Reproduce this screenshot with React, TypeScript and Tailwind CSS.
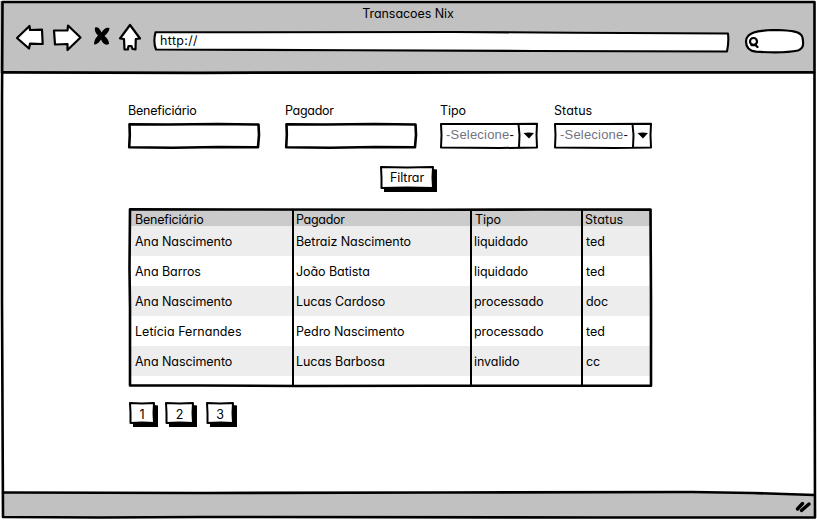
import type { ReactNode } from "react";

const overlay = "pointer-events-none absolute inset-0 h-full w-full overflow-visible";

function Ink({ d, width = 3, fill = "none" }: { d: string; width?: number; fill?: string }) {
  return <path d={d} fill={fill} stroke="#000" strokeWidth={width} strokeLinejoin="round" strokeLinecap="round" />;
}

function Field({ label, children, className }: { label: string; children: ReactNode; className: string }) {
  return (
    <div className={className}>
      <div className="h-[21px] whitespace-nowrap pt-px leading-4">{label}</div>
      {children}
    </div>
  );
}

function TextInput() {
  return (
    <div className="relative h-[26px] w-[132px] bg-white">
      <svg className={overlay}>
        <Ink width={2.6} d="M1.5 1.2 L40 1.5 L90 1 L130.500 1.500 L131 12 L130 24.200 L90 24 L45 24.800 L1.200 24.200 L1.800 12 Z" />
      </svg>
    </div>
  );
}

function Select() {
  return (
    <div className="relative flex h-[26px] w-[98px] items-center bg-white pl-[6px] font-['Liberation_Sans',Arial,sans-serif] text-[13px] tracking-[0.2px] text-[#73737f]">
      <span className="-mt-[2px]">
        -Selecione<span className="text-black">-</span>
      </span>
      <svg className={overlay}>
        <Ink width={2} d="M1 1 L50 1 L97 .8 L96.5 12 L97 24.5 L60 25 L1 24.5 L1.5 12 Z M78.5 1.2 L79.5 12 L79 24.5" />
        <path d="M83.500 10 Q88.500 9 94 10 L89 15.500 Z" />
      </svg>
    </div>
  );
}

function Button({ children, className, w, h }: { children: ReactNode; className: string; w: number; h: number }) {
  return (
    <button className={`relative flex items-center justify-center bg-white ${className}`}>
      <svg className={overlay}>
        <path d={`M4 ${h - 1} H${w - 1} V3 L${w + 3} 3.500 V${h + 3} H4 Z`} />
        <Ink width={2} d={`M1 1 L${w / 2} 1.500 L${w - 1} 1 L${w - 1.5} ${h / 2} L${w - 1} ${h - 1} L${w / 2} ${h - 1.5} L1.500 ${h - 1} L1.500 ${h / 2} Z`} />
      </svg>
      <span className="relative">{children}</span>
    </button>
  );
}

const rows = [
  ["Ana Nascimento", "Betraiz Nascimento", "liquidado", "ted"],
  ["Ana Barros", "João Batista", "liquidado", "ted"],
  ["Ana Nascimento", "Lucas Cardoso", "processado", "doc"],
  ["Letícia Fernandes", "Pedro Nascimento", "processado", "ted"],
  ["Ana Nascimento", "Lucas Barbosa", "invalido", "cc"],
];

function Table() {
  const grid = "grid grid-cols-[164px_178px_111px_1fr] items-center whitespace-nowrap";
  return (
    <div className="relative ml-px mt-[19px] h-[179px] w-[523px] bg-white pt-[2px]">
      <div className={`${grid} h-4 bg-[#cbcbcb] pt-[2px]`}>
        <span className="pl-[6px] tracking-[-0.2px]">Beneficiário</span>
        <span className="pl-[3px] tracking-[-0.3px]">Pagador</span>
        <span className="pl-1">Tipo</span>
        <span className="pl-[3px] tracking-[0.1px]">Status</span>
      </div>
      {rows.map((row, i) => (
        <div key={i} className={`${grid} h-[30px] pt-[2px] odd:bg-white even:bg-[#ededed]`}>
          <span className={i === 3 ? "pl-[6px] tracking-[0.04px]" : "pl-[6px]"}>{row[0]}</span>
          <span className="pl-[3px]">{row[1]}</span>
          <span className="pl-[3px]">{row[2]}</span>
          <span className="pl-[4px]">{row[3]}</span>
        </div>
      ))}
      <svg className={overlay}>
        <Ink width={2.6} d="M1 1.3 L110 1.500 L300 1.800 L410 1.500 L521.500 1.600 L522 90 L522 177.700 L300 177.700 L170 178 L70 177.500 L1 177.500 L1 100 L.5 60 Z" />
        <Ink width={2} d="M164 2 V177 M342 2 V177 M453 2 V177" />
      </svg>
    </div>
  );
}

function Header() {
  return (
    <header className="-ml-[2px] h-[72px] bg-[#c1c1c1] pl-[2px]">
      <div className="flex h-[21px] justify-center pt-[5px] leading-4">
        <span className="-ml-px">Transacoes Nix</span>
      </div>
      <div className="-ml-[2px] flex h-[40px] items-center">
        <svg className="h-[40px] w-[154px] shrink-0" viewBox="0 21.500 154 40">
          <Ink fill="#fff" width={2.2} d="M17 37.500 L29.500 25.500 L30 29.500 L42 29.200 L42.700 43.500 L30 43.200 L29 48 Z" />
          <Ink fill="#fff" width={2.2} d="M54 30 L67.500 30 L68 25 L80.500 37 L67.500 49.500 L67.500 43.500 L55 44 Z" />
          <path d="M95 27 Q99 26 101.500 32 Q105 26 109.500 27.500 Q109.500 31 104.500 35.500 Q109 39 109 43.500 Q104 46 101 39 Q98 44 94 44 Q94 39 98 35 Q94 31 95 27Z" />
          <Ink fill="#fff" width={2.2} d="M130 24.500 L140 38 L135.800 38.500 L135.500 49 L132.500 48.500 L131.500 45.500 L128.500 45.500 L127.800 49 L124.500 49 L124 38.500 L120 38 Z" />
        </svg>
        <div className="relative flex h-[20px] w-[575px] items-center pl-[6px]">
          <svg className={overlay}>
            <Ink fill="#fff" width={2.1} d="M1.5 .3 L300 0 L420 .7 L574 1.500 Q575 10 573 19.500 L380 19 L200 18.300 L2 17.500 Q-1 10 1.500 .3 Z" />
          </svg>
          <span className="relative -mt-[2px] tracking-[0.35px]">http://</span>
        </div>
        <svg className="ml-[15px] h-[26px] w-[61px]" viewBox="744 28.500 61 26">
          <Ink fill="#fff" width={2.2} d="M746 41 C746 32 757 30 775 29.500 C792 30 801 31 802.500 37 C804 45 803 48 798 50 C784 53 772 52 756 51.200 C750 50.500 746 47 746 41 Z" />
          <circle cx="753.500" cy="41" r="3.500" fill="#fff" stroke="#000" strokeWidth="2.200" />
          <Ink width={2.3} d="M751.500 44.500 L755.500 44.500 L757.500 46.500" />
        </svg>
      </div>
    </header>
  );
}

export default function App() {
  return (
    <main className="relative flex h-[520px] w-[817px] flex-col overflow-hidden bg-white pb-[2px] pl-[2px] pr-[2px] pt-px font-[Inter,sans-serif] text-[12.5px] leading-4 tracking-[-0.06px] text-black [font-feature-settings:'cv11']">
      <Header />
      <section className="min-h-0 flex-1 pl-[126px] pt-[29px]">
        <div className="flex">
          <Field label="Beneficiário" className="w-[157px] tracking-[-0.2px]"><TextInput /></Field>
          <Field label="Pagador" className="w-[155px] tracking-[-0.3px]"><TextInput /></Field>
          <Field label="Tipo" className="w-[114px]"><Select /></Field>
          <Field label="Status" className="w-[98px] tracking-[0.1px]"><Select /></Field>
        </div>
        <div className="mt-[17px] pl-[252px]">
          <Button className="h-[23px] w-[54px] pt-px" w={54} h={23}>Filtrar</Button>
        </div>
        <Table />
        <nav className="ml-px mt-[15px] flex">
          <Button className="h-[22px] w-[26px] pt-[4px]" w={26} h={22}>1</Button>
          <Button className="ml-[10px] h-[22px] w-[29px] pt-[4px]" w={29} h={22}>2</Button>
          <Button className="ml-[12px] h-[22px] w-[28px] pt-[4px]" w={28} h={22}>3</Button>
        </nav>
      </section>
      <footer className="relative h-[26px] bg-[#c1c1c1]">
        <svg className={overlay}>
          <path d="M590 -1 L813 -1 L813 2 L720 0 Z" fill="#fff" />
          <Ink width={2.6} d="M1 .5 L200 1 L440 .5 L690 0 L750 1 L812 3" />
          <Ink width={3.4} d="M795.500 17 L800.500 11.500 M799.500 18.500 L807 12" />
        </svg>
      </footer>
      <svg className={overlay}>
        <Ink width={2.6} d="M2.5 2 L400 2 L814.500 2 L814.500 260 L815 517.500 L600 517.500 L200 517 L100 517.500 L3 517 L2 300 L2 100 Z" />
        <Ink width={2.8} d="M3 72.300 L200 72.800 L400 72.500 L600 72.300 L814 72.300" />
      </svg>
    </main>
  );
}
